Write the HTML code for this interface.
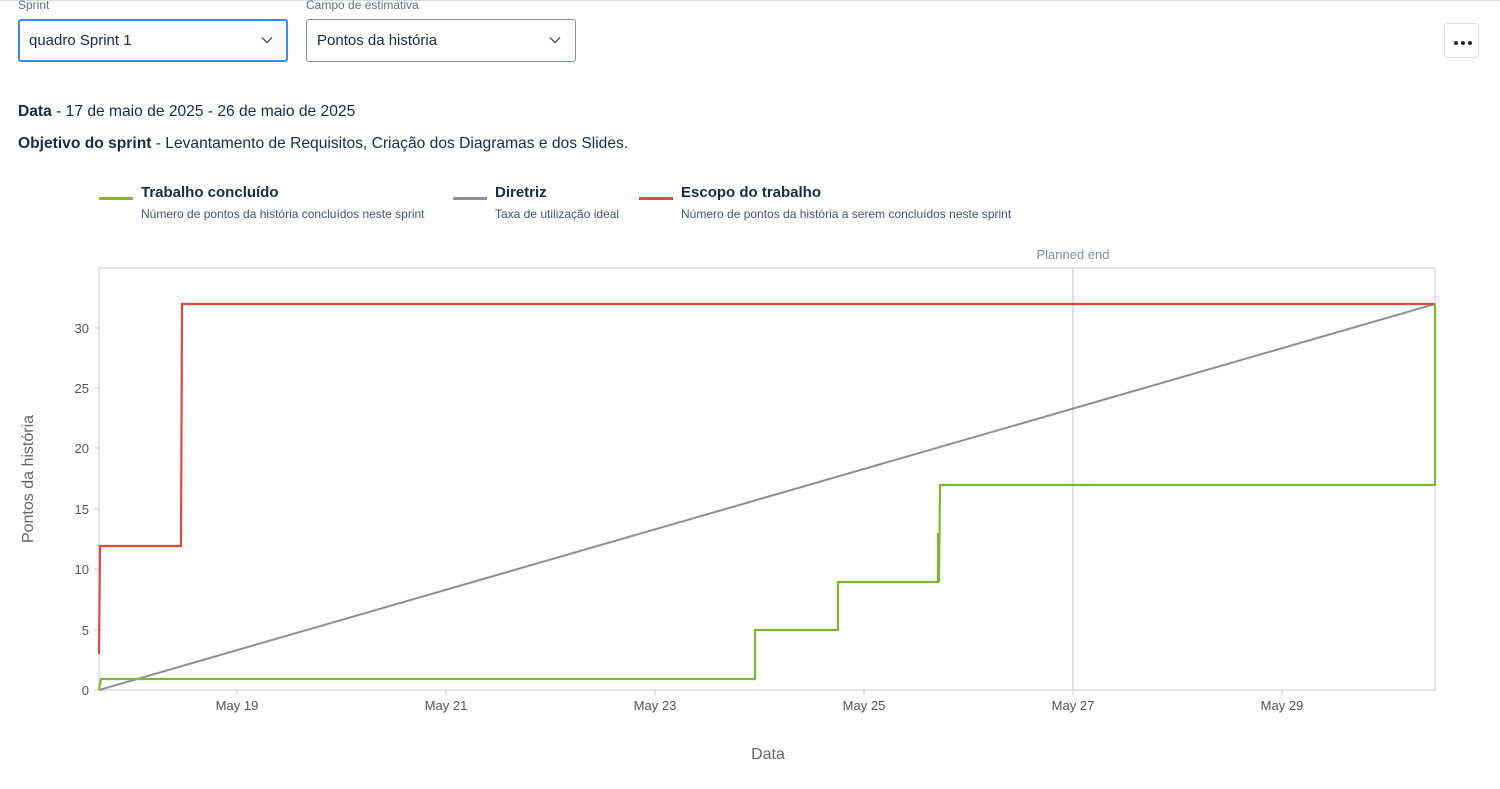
<!DOCTYPE html>
<html><head><meta charset="utf-8"><style>
body{margin:0;width:1500px;height:789px;background:#fff;font-family:"Liberation Sans","DejaVu Sans",sans-serif;color:#172b4d;position:relative;overflow:hidden}
.top{position:absolute;left:0;right:0;top:0;height:1px;background:#dcdcdc}
.lbl{position:absolute;font-size:12px;color:#626f86;top:-2px}
.sel{position:absolute;top:19px;height:43px;box-sizing:border-box;border:1px solid #8590a2;border-radius:3px;font-size:15px;line-height:41px;padding-left:10px;color:#172b4d}
.sel svg{position:absolute;right:14px;top:16px}
.more{position:absolute;left:1444px;top:23px;width:35px;height:35px;box-sizing:border-box;border:1px solid #dcdfe4;border-radius:4px}
.more i{position:absolute;top:17px;width:4px;height:4px;border-radius:2px;background:#22272b}
.t{position:absolute;left:18px;font-size:15.6px;color:#172b4d}
.lg{position:absolute;top:184px}
.lg .ln{position:absolute;top:13px;width:34px;height:3px}
.lg .h{position:absolute;left:42px;top:0;font-size:15px;font-weight:bold;white-space:nowrap;color:#172b4d}
.lg .s{position:absolute;left:42px;top:23px;font-size:12px;color:#44546f;white-space:nowrap}
</style></head><body>
<div class="top"></div>
<div class="lbl" style="left:18px">Sprint</div>
<div class="lbl" style="left:306px">Campo de estimativa</div>
<div class="sel" style="left:18px;width:270px;border:2px solid #388bff;line-height:39px;padding-left:9px">quadro Sprint 1<svg width="12" height="8" viewBox="0 0 12 8" style="top:15px;right:13px"><path d="M1 1.5l5 5 5-5" fill="none" stroke="#44546f" stroke-width="1.4"/></svg></div>
<div class="sel" style="left:306px;width:270px">Pontos da história<svg width="12" height="8" viewBox="0 0 12 8"><path d="M1 1.5l5 5 5-5" fill="none" stroke="#44546f" stroke-width="1.4"/></svg></div>
<div class="more"><i style="left:9px"></i><i style="left:16px"></i><i style="left:23px"></i></div>
<div class="t" style="top:103px"><b>Data</b> - 17 de maio de 2025 - 26 de maio de 2025</div>
<div class="t" style="top:135px"><b>Objetivo do sprint</b> - Levantamento de Requisitos, Criação dos Diagramas e dos Slides.</div>
<div class="lg" style="left:99px"><div class="ln" style="background:#82b536"></div><div class="h">Trabalho concluído</div><div class="s">Número de pontos da história concluídos neste sprint</div></div>
<div class="lg" style="left:453px"><div class="ln" style="background:#8f8f9b"></div><div class="h">Diretriz</div><div class="s">Taxa de utilização ideal</div></div>
<div class="lg" style="left:639px"><div class="ln" style="background:#e2483d"></div><div class="h">Escopo do trabalho</div><div class="s">Número de pontos da história a serem concluídos neste sprint</div></div>
<svg width="1500" height="789" style="position:absolute;left:0;top:0" font-family="Liberation Sans, sans-serif">
<rect x="99" y="268" width="1336" height="422" fill="none" stroke="#dcdcdc" stroke-width="1.5"/>
<line x1="1073" y1="268" x2="1073" y2="690" stroke="#d6d6d6" stroke-width="1.5"/>
<text x="1073" y="259" font-size="13" fill="#8590a2" text-anchor="middle">Planned end</text>
<g font-size="13" fill="#555" text-anchor="end">
<text x="89" y="695">0</text><text x="89" y="635">5</text><text x="89" y="574">10</text><text x="89" y="514">15</text><text x="89" y="453">20</text><text x="89" y="393">25</text><text x="89" y="333">30</text></g>
<g stroke="#ccc" stroke-width="1"><line x1="94" y1="690" x2="99" y2="690"/><line x1="94" y1="630" x2="99" y2="630"/><line x1="94" y1="569" x2="99" y2="569"/><line x1="94" y1="509" x2="99" y2="509"/><line x1="94" y1="448" x2="99" y2="448"/><line x1="94" y1="388" x2="99" y2="388"/><line x1="94" y1="328" x2="99" y2="328"/>
<line x1="237" y1="690" x2="237" y2="695"/><line x1="446" y1="690" x2="446" y2="695"/><line x1="655" y1="690" x2="655" y2="695"/><line x1="864" y1="690" x2="864" y2="695"/><line x1="1073" y1="690" x2="1073" y2="695"/><line x1="1282" y1="690" x2="1282" y2="695"/></g>
<g font-size="13" fill="#555" text-anchor="middle">
<text x="237" y="710">May 19</text><text x="446" y="710">May 21</text><text x="655" y="710">May 23</text><text x="864" y="710">May 25</text><text x="1073" y="710">May 27</text><text x="1282" y="710">May 29</text></g>
<text x="768" y="759" font-size="16" fill="#666" text-anchor="middle">Data</text>
<text transform="translate(33,479) rotate(-90)" font-size="16" fill="#666" text-anchor="middle">Pontos da história</text>
<line x1="99" y1="690" x2="1435" y2="304" stroke="#8f8f9b" stroke-width="2"/>
<polyline points="99,654 100,546 181,546 182,304 1435,304" fill="none" stroke="#e2483d" stroke-width="2.2"/>
<polyline points="99,690 101,679 755,679 755,630 838,630 838,582 938,582 938,533 939,582 940,485 1435,485 1435,304" fill="none" stroke="#82b536" stroke-width="2.2"/>
</svg>
</body></html>
